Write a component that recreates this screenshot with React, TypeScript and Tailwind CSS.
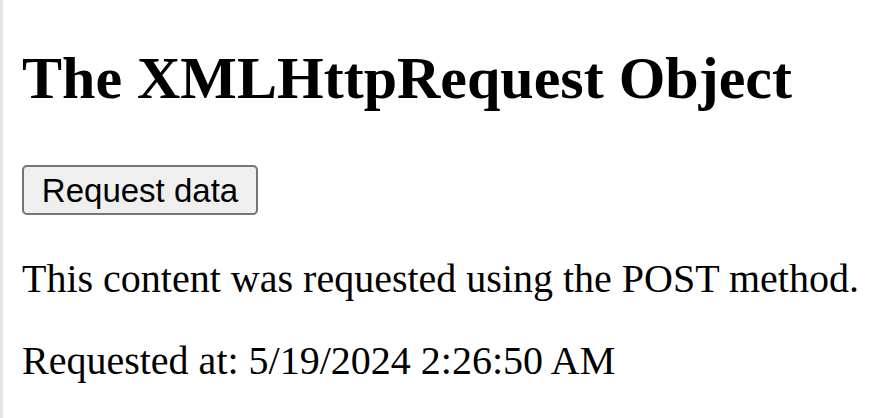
export default function App() {
  return (
    <div className="h-[418px] w-[882px] bg-white flex">
      <div className="w-[3px] bg-[#e4e4e4] ml-0 shrink-0" />
      <div className="pl-[19px] flex flex-col items-start" style={{ fontFamily: '"Liberation Serif", "Times New Roman", serif' }}>
        <h1 className="mt-[44px] text-[60px] leading-[69px] font-bold text-black whitespace-nowrap" style={{ fontFamily: '"Liberation Serif", "Times New Roman", serif' }}>
          The XMLHttpRequest Object
        </h1>
        <button className="mt-[52px] w-[236px] h-[50px] bg-[#efefef] border-2 border-[#767676] rounded-[5px] text-[33px] leading-none text-black flex items-center justify-center" style={{ fontFamily: '"Liberation Sans", Arial, sans-serif' }}>
          Request data
        </button>
        <p className="mt-[41px] text-[40px] leading-[46px] text-black whitespace-nowrap">
          This content was requested using the POST method.
        </p>
        <p className="mt-[36px] text-[40px] leading-[46px] text-black whitespace-nowrap">
          Requested at: 5/19/2024 2:26:50 AM
        </p>
      </div>
    </div>
  );
}
